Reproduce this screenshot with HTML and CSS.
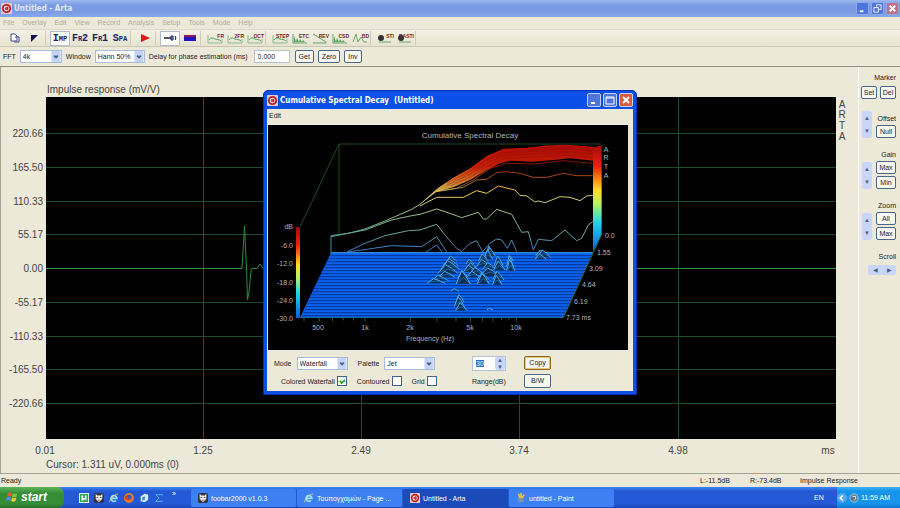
FILE: index.html
```html
<!DOCTYPE html>
<html lang="en">
<head>
    <meta charset="UTF-8">
    <meta name="viewport" content="width=device-width, initial-scale=1.0">
    <title>Untitled - Arta</title>
    <link rel="stylesheet" href="styles.css">
</head>
<body>

    <!-- Shared icons -->
    <svg class="sprites" aria-hidden="true">
        <symbol id="arta" viewBox="0 0 12 12">
            <rect width="12" height="12" rx="1" fill="#e9c9cc"/>
            <circle cx="6" cy="6" r="5" fill="#b3202a"/>
            <circle cx="6" cy="6" r="3" fill="#fff"/>
            <path d="M6 4h2v4H6z" fill="#b3202a"/>
            <circle cx="5.500" cy="6" r="1.500" fill="#d3303a"/>
        </symbol>
        <symbol id="ie" viewBox="0 0 12 12">
            <path d="M3 6.500h6.500A3.500 3.500 0 1 0 8.500 9" fill="none" stroke="#9be0ff" stroke-width="2"/>
            <path d="M1 11C0 8 6 2 11 1" fill="none" stroke="#e8d37a" stroke-width="1"/>
        </symbol>
        <symbol id="foobar" viewBox="0 0 12 12">
            <rect width="12" height="12" rx="2" fill="#33343c"/>
            <path d="M2 1l2 2h4l2-2v6L6 11 2 7z" fill="#eee"/>
            <path d="M3 5h2v1H3zM7 5h2v1H7zM5 8h2v1H5z" fill="#222"/>
        </symbol>
        <symbol id="curve" viewBox="0 0 16 12">
            <path d="M1 3v8h14V7" fill="none" stroke="#8dbb8d" stroke-width="1"/>
            <path d="M2 8c2-3 4-2 6-1s4 0 6 2" fill="none" stroke="#4f9d5c" stroke-width="1"/>
        </symbol>
        <symbol id="spikes" viewBox="0 0 16 12">
            <path d="M1 2v9h14" fill="none" stroke="#5fa568" stroke-width="1"/>
            <path d="M2 10V4l2 6 1-4 2 4 1-3 2 3 1-2 2 2z" fill="#4f9d5c"/>
        </symbol>
    </svg>

    <!-- Title bar -->
    <header class="titlebar">
        <svg class="app-icon"><use href="#arta"/></svg>
        <h1>Untitled - Arta</h1>
        <div class="win-buttons">
            <button class="win-btn" aria-label="Minimize"><svg viewBox="0 0 12 12"><path d="M3 9h4" stroke="#fff" stroke-width="2"/></svg></button>
            <button class="win-btn" aria-label="Restore"><svg viewBox="0 0 12 12"><path d="M5 4V2h5v5H8M2 5h5v5H2z" fill="none" stroke="#fff"/></svg></button>
            <button class="win-btn close" aria-label="Close"><svg viewBox="0 0 12 12"><path d="M3 3l6 6M9 3l-6 6" stroke="#fff" stroke-width="2"/></svg></button>
        </div>
    </header>

    <!-- Menu -->
    <nav class="menubar">
        <a href="#">File</a>
        <a href="#">Overlay</a>
        <a href="#">Edit</a>
        <a href="#">View</a>
        <a href="#">Record</a>
        <a href="#">Analysis</a>
        <a href="#">Setup</a>
        <a href="#">Tools</a>
        <a href="#">Mode</a>
        <a href="#">Help</a>
    </nav>

    <!-- Toolbar -->
    <div class="toolbar">
        <button aria-label="New"><svg viewBox="0 0 16 12"><path d="M4 2h4l2 2v5H4zM8 5h4v5H7" fill="#fff" stroke="#454a80"/></svg></button>
        <button aria-label="Marker"><svg viewBox="0 0 16 12"><path d="M4 3h7L4 10z" fill="#101050"/></svg></button>
        <span class="sep"></span>
        <button class="word pressed">Imp</button>
        <button class="word">Fr2</button>
        <button class="word">Fr1</button>
        <button class="word">Spa</button>
        <span class="sep"></span>
        <button aria-label="Start"><svg viewBox="0 0 16 12"><path d="M4 2l9 4-9 4z" fill="#e01818"/></svg></button>
        <span class="sep"></span>
        <button class="pressed" aria-label="Microphone"><svg viewBox="0 0 16 12"><path d="M2 6h7" stroke="#556" stroke-width="2"/><path d="M9 4h2v4H9zM13 4c1 1 1 3 0 4" fill="#8a90b8" stroke="#1a1f70" stroke-width="1"/></svg></button>
        <button aria-label="Level"><svg viewBox="0 0 16 12"><path d="M2 3h12v3H2z" fill="#8b1a55"/><path d="M2 5h12v4H2z" fill="#2212c8"/></svg></button>
        <span class="sep"></span>
        <button class="plot"><svg viewBox="0 0 16 12"><use href="#curve"/></svg><b>FR</b></button>
        <button class="plot"><svg viewBox="0 0 16 12"><use href="#curve"/></svg><b>2FR</b></button>
        <button class="plot"><svg viewBox="0 0 16 12"><use href="#curve"/></svg><b>OCT</b></button>
        <span class="sep"></span>
        <button class="plot"><svg viewBox="0 0 16 12"><use href="#curve"/></svg><b>STEP</b></button>
        <button class="plot"><svg viewBox="0 0 16 12"><use href="#spikes"/></svg><b>ETC</b></button>
        <button class="plot"><svg viewBox="0 0 16 12"><path d="M1 2l13 8v1H1" fill="none" stroke="#5fa568"/></svg><b>REV</b></button>
        <button class="plot"><svg viewBox="0 0 16 12"><use href="#spikes"/></svg><b>CSD</b></button>
        <button class="plot"><svg viewBox="0 0 16 12"><path d="M1 10l3-8 2 8 3-5 3 5h3" fill="none" stroke="#6da56d"/></svg><b>BD</b></button>
        <span class="sep"></span>
        <button class="plot"><svg viewBox="0 0 16 12"><circle cx="4" cy="6" r="3" fill="#333"/><path d="M2 10h12" stroke="#6da56d"/></svg><b>STI</b></button>
        <button class="plot"><svg viewBox="0 0 16 12"><circle cx="4" cy="6" r="3" fill="#333"/><path d="M2 10h12" stroke="#6da56d"/></svg><b>RASTI</b></button>
        <span class="sep"></span>
    </div>

    <!-- FFT settings -->
    <form class="settings">
        <label for="fft">FFT</label>
        <select id="fft" class="fft"><option>4k</option></select>
        <label for="win">Window</label>
        <select id="win" class="window-type"><option>Hann 50%</option></select>
        <label for="delay">Delay for phase estimation (ms)</label>
        <input id="delay" type="text" value="0.000">
        <button type="button" class="btn">Get</button>
        <button type="button" class="btn">Zero</button>
        <button type="button" class="btn">Inv</button>
    </form>

    <main>
        <!-- Impulse response -->
        <section class="chart">
            <svg viewBox="1 0 857 406" preserveAspectRatio="xMinYMin meet">
                <rect x="46" y="30" width="790" height="342" fill="#000"/>
                <path class="grid" d="M46 66.500h790M46 100.500h790M46 134.500h790M46 167.500h790M46 235.500h790M46 269.500h790M46 302.500h790M46 336.500h790M203.500 30v342M361.500 30v342M519.500 30v342M678.500 30v342"/>
                <path class="trace" d="M46 201.500H242L244.500 159L246.500 201L247.500 233L249 225L251 204L252 201.500H257L260 197L263 201.500H836"/>
                <g class="chart-text">
                    <text x="47" y="26">Impulse response (mV/V)</text>
                    <g text-anchor="end">
                        <text x="43" y="70">220.66</text>
                        <text x="43" y="104">165.50</text>
                        <text x="43" y="138">110.33</text>
                        <text x="43" y="171">55.17</text>
                        <text x="43" y="205">0.00</text>
                        <text x="43" y="239">-55.17</text>
                        <text x="43" y="273">-110.33</text>
                        <text x="43" y="306">-165.50</text>
                        <text x="43" y="340">-220.66</text>
                    </g>
                    <g text-anchor="middle">
                        <text x="45" y="387">0.01</text>
                        <text x="203" y="387">1.25</text>
                        <text x="361" y="387">2.49</text>
                        <text x="519" y="387">3.74</text>
                        <text x="678" y="387">4.98</text>
                        <text x="828" y="387">ms</text>
                        <text x="842" y="41">A</text>
                        <text x="842" y="51">R</text>
                        <text x="842" y="62">T</text>
                        <text x="842" y="73">A</text>
                    </g>
                    <text x="46" y="401">Cursor: 1.311 uV, 0.000ms (0)</text>
                </g>
            </svg>
        </section>

        <!-- Side controls -->
        <aside class="side">
            <div class="group">
                <span class="caption">Marker</span>
                <div class="pair">
                    <button class="btn">Set</button>
                    <button class="btn">Del</button>
                </div>
            </div>
            <div class="group with-spin">
                <div class="spin"><button aria-label="Offset up">▲</button><button aria-label="Offset down">▼</button></div>
                <div class="stack"><span class="caption">Offset</span><button class="btn">Null</button></div>
            </div>
            <div class="group with-spin">
                <div class="spin"><button aria-label="Gain up">▲</button><button aria-label="Gain down">▼</button></div>
                <div class="stack"><span class="caption">Gain</span><button class="btn">Max</button><button class="btn">Min</button></div>
            </div>
            <div class="group with-spin">
                <div class="spin"><button aria-label="Zoom up">▲</button><button aria-label="Zoom down">▼</button></div>
                <div class="stack"><span class="caption">Zoom</span><button class="btn">All</button><button class="btn">Max</button></div>
            </div>
            <div class="group">
                <span class="caption">Scroll</span>
                <div class="spin flat"><button aria-label="Scroll left">◀</button><button aria-label="Scroll right">▶</button></div>
            </div>
        </aside>
    </main>

    <!-- Status bar -->
    <div class="status">
        <span class="ready">Ready</span>
        <span class="level">L:-11.5dB</span>
        <span class="level">R:-73.4dB</span>
        <span class="mode">Impulse Response</span>
    </div>

    <!-- Taskbar -->
    <footer class="taskbar">
        <button class="start">
            <svg viewBox="0 0 16 14"><path d="M3 2c2-1 3-1 5 0L7 6C5 5 4 5 2 6z" fill="#e8562a"/><path d="M9 2c2 1 3 1 5 0l-1 4c-2 1-3 1-5 0z" fill="#7fc242"/><path d="M2 7c2-1 3-1 5 0l-1 4c-2-1-3-1-5 0z" fill="#4a8df0"/><path d="M8 7c2 1 3 1 5 0l-1 4c-2 1-3 1-5 0z" fill="#f6c52c"/></svg>
            start
        </button>
        <div class="quick">
            <a href="#" aria-label="uTorrent"><svg viewBox="0 0 12 12"><rect width="12" height="12" rx="1" fill="#fff"/><rect x="1" y="1" width="10" height="10" fill="#2fa84e"/><path d="M4 3v6M4 7h4V3M8 7v1" fill="none" stroke="#fff" stroke-width="2"/></svg></a>
            <a href="#" aria-label="foobar2000"><svg><use href="#foobar"/></svg></a>
            <a href="#" aria-label="Internet Explorer"><svg><use href="#ie"/></svg></a>
            <a href="#" aria-label="Firefox"><svg viewBox="0 0 12 12"><circle cx="6" cy="6" r="6" fill="#e6762a"/><circle cx="6" cy="5" r="3" fill="#2c5fae"/><path d="M1 3c2 0 3 1 4 3l3 1-3 2-4-2z" fill="#c84a1c"/></svg></a>
            <a href="#" aria-label="Outlook"><svg viewBox="0 0 12 12"><path d="M2 4l5-3 4 1v6l-4 3-5-1z" fill="#d6eeff"/><path d="M4 5l3-1v4l-3 1z" fill="#2f7fd0"/></svg></a>
            <a href="#" aria-label="Sum"><svg viewBox="0 0 12 12"><path d="M10 3V2H2l4 4-4 4h8V9" fill="none" stroke="#5cc0ff" stroke-width="1"/></svg></a>
            <a href="#" class="more" aria-label="More">»</a>
        </div>
        <div class="tasks">
            <button><svg><use href="#foobar"/></svg>foobar2000 v1.0.3</button>
            <button><svg><use href="#ie"/></svg>Τουπογχαμών - Page ...</button>
            <button class="active"><svg><use href="#arta"/></svg>Untitled - Arta</button>
            <button><svg viewBox="0 0 12 12"><path d="M2 5h7v6H3z" fill="#7c93a8"/><path d="M3 1l2 5M6 0v6M10 2L7 6" stroke="#f0c040" stroke-width="2"/></svg>untitled - Paint</button>
        </div>
        <span class="lang">EN</span>
        <div class="tray">
            <svg viewBox="0 0 12 12"><circle cx="6" cy="6" r="6" fill="#55a8f5"/><path d="M7 3L4 6l3 3" fill="none" stroke="#fff" stroke-width="2"/></svg>
            <svg viewBox="0 0 12 12"><circle cx="6" cy="6" r="5" fill="#5b7790" stroke="#b9d2e4"/><path d="M4 4h4v3L6 9" fill="none" stroke="#fff"/></svg>
            <time>11:59 AM</time>
        </div>
    </footer>

    <!-- Spectral decay window -->
    <div class="dialog" role="dialog" aria-labelledby="csd-title">
        <div class="dialog-title">
            <svg class="app-icon"><use href="#arta"/></svg>
            <h2 id="csd-title">Cumulative Spectral Decay&nbsp; (Untitled)</h2>
            <div class="win-buttons">
                <button class="win-btn" aria-label="Minimize"><svg viewBox="0 0 12 12"><path d="M3 9h4" stroke="#fff" stroke-width="2"/></svg></button>
                <button class="win-btn" aria-label="Maximize"><svg viewBox="0 0 12 12"><path d="M2 3h8v7H2zM2 4h8" fill="none" stroke="#fff"/></svg></button>
                <button class="win-btn close" aria-label="Close"><svg viewBox="0 0 12 12"><path d="M3 3l6 6M9 3l-6 6" stroke="#fff" stroke-width="2"/></svg></button>
            </div>
        </div>
        <div class="dialog-body">
            <nav class="dialog-menu"><a href="#">Edit</a></nav>
            <svg class="decay" viewBox="0 0 360 225">
                <defs>
                    <linearGradient id="jet" x1="0" y1="0" x2="0" y2="1">
                        <stop offset="0" stop-color="#a00c08"/>
                        <stop offset=".2" stop-color="#f02010"/>
                        <stop offset=".42" stop-color="#ffe020"/>
                        <stop offset=".55" stop-color="#b8f060"/>
                        <stop offset=".72" stop-color="#20d8e8"/>
                        <stop offset="1" stop-color="#0a5ae0"/>
                    </linearGradient>
                    <linearGradient id="height" gradientUnits="userSpaceOnUse" x1="0" y1="75" x2="0" y2="400">
                        <stop offset="0" stop-color="#c80c04"/>
                        <stop offset=".2" stop-color="#e82408"/>
                        <stop offset=".3" stop-color="#f47020"/>
                        <stop offset=".43" stop-color="#eed060"/>
                        <stop offset=".6" stop-color="#a8c880"/>
                        <stop offset=".85" stop-color="#5aa0a0"/>
                        <stop offset="1" stop-color="#2f6ed0"/>
                    </linearGradient>
                </defs>
                <rect width="360" height="225" fill="#000"/>
                <path d="M32 102L71 19H333M71 19v90" fill="none" stroke="#1d4a22"/>
                <rect x="28" y="102" width="4" height="91" fill="url(#jet)"/>
                <g transform="scale(.33333) translate(456 -15)">
                    <path d="M-267 398H519L430 593H-360z" fill="#0a62ee"/>
                    <g id="floor"></g>
                    <path d="M-267 398H519" stroke="#3aa0f0" stroke-width="3"/>
                    <path d="M-267 400V347" stroke="#3f90a8" stroke-width="3"/>
                    <path d="M0 253L55 205L100 175L150 147L200 110L250 88L320 85L380 78L440 76L520 82V122L450 115L400 120L340 125L270 122L240 130L200 150L150 180L100 202L50 215z" fill="url(#height)" opacity=".85"/>
                    <g class="curves" stroke="url(#height)">
                        <path d="M-267 347L-215 340L-165 327L-105 303L-25 268L0 253L55 205L100 175L150 147L200 110L250 88L320 85L380 78L440 76L518 82"/>
                        <path d="M50 213L110 205L160 180L210 145L260 130L340 132L430 122L518 130" opacity=".6"/>
                        <path d="M50 215L130 202L170 180L200 178L230 158L260 155L300 160L340 172L380 172L430 160L470 167L518 167" opacity=".7"/>
                        <path d="M0 258L50 232H130L170 212L200 220L235 198L285 210L300 226L320 228L345 246L355 243L375 248L420 230L450 232L480 242L500 228L518 226"/>
                        <path d="M-267 350L-165 330L-85 300L-25 287L0 283L50 267L90 280L125 293L175 277L190 297H200L230 268L275 283L305 337L325 335L340 390L355 358L395 362L435 330L470 362L485 355L505 315L518 305"/>
                        <path d="M-220 396L-165 370L-105 347L-35 332L0 330L50 313L75 345L110 385L125 395L150 370L170 362L188 395L210 370L230 357L245 360L262 385L275 360L290 395"/>
                        <path d="M-215 396L-85 377L5 380L50 350L80 395M15 398L50 375L68 398"/>
                    </g>
                    <path class="band" d="M80 190L150 154L200 120L250 98L320 94L440 86L518 92M80 196L150 163L200 130L250 107L320 103L440 96L518 102M90 198L150 172L200 141L250 116L320 112L440 106L518 112"/>
                    <path d="M519 82L545 76V343L519 396z" fill="url(#jet)"/>
                    <path d="M545 343L430 593" stroke="#226a38" stroke-width="3"/>
                    <path d="M-360 593H430M-348 593v12M-302 593v12M-263 593v12M-230 593v8M-200 593v8M-165 593v12M-28 593v12M51 593v12M108 593v12M151 593v12M188 593v12M219 593v12M245 593v8M267 593v8M289 593v12" stroke="#2b7c70" stroke-width="2"/>
                    <g id="peaks"></g>
                </g>
                <g class="decay-text">
                    <text x="202" y="13" text-anchor="middle">Cumulative Spectral Decay</text>
                    <g text-anchor="end" class="small">
                        <text x="25" y="104">dB</text>
                        <text x="25" y="123">-6.0</text>
                        <text x="25" y="141">-12.0</text>
                        <text x="25" y="160">-18.0</text>
                        <text x="25" y="178">-24.0</text>
                        <text x="25" y="196">-30.0</text>
                    </g>
                    <g text-anchor="middle" class="small">
                        <text x="50" y="205">500</text>
                        <text x="97" y="205">1k</text>
                        <text x="142" y="205">2k</text>
                        <text x="202" y="205">5k</text>
                        <text x="248" y="205">10k</text>
                        <text x="162" y="216">Frequency (Hz)</text>
                        <text x="338" y="27">A</text>
                        <text x="338" y="35">R</text>
                        <text x="338" y="44">T</text>
                        <text x="338" y="53">A</text>
                    </g>
                    <g class="small">
                        <text x="337" y="113">0.0</text>
                        <text x="329" y="130">1.55</text>
                        <text x="321" y="146">3.09</text>
                        <text x="314" y="162">4.64</text>
                        <text x="306" y="179">6.19</text>
                        <text x="298" y="195">7.73 ms</text>
                    </g>
                </g>
            </svg>
            <form class="options">
                <div class="options-left">
                    <div class="line">
                        <label for="mode">Mode</label>
                        <select id="mode"><option>Waterfall</option></select>
                        <label for="palette" class="palette">Palette</label>
                        <select id="palette"><option>Jet</option></select>
                    </div>
                    <div class="line checks">
                        <label>Colored Waterfall<input type="checkbox" checked></label>
                        <label>Contoured<input type="checkbox"></label>
                        <label>Grid<input type="checkbox"></label>
                    </div>
                </div>
                <div class="range">
                    <div class="range-box">
                        <input id="range" type="text" value="30">
                        <div class="spin"><button type="button" aria-label="Range up">▲</button><button type="button" aria-label="Range down">▼</button></div>
                    </div>
                    <label for="range">Range(dB)</label>
                </div>
                <div class="actions">
                    <button type="button" class="btn default">Copy</button>
                    <button type="button" class="btn">B/W</button>
                </div>
            </form>
        </div>
    </div>

    <script src="decay.js"></script>
</body>
</html>
```
FILE: decay.js
```js
const floor = document.getElementById('floor');
const peaks = document.getElementById('peaks');

// Time slices on the floor of the waterfall
let lines = '';
for (let y = 407; y < 593; y += 9) {
    const shift = (y - 398) * 89 / 195;
    lines += `<path d="M${-267 - shift} ${y}H${519 - shift}"/>`;
}
floor.innerHTML = lines;

// Ridges left on the floor: x, base y, width, height
const ridges = [
    [365, 408, 36, 18], [372, 412, 40, 22], [362, 418, 34, 16],
    [208, 398, 16, 20], [212, 408, 28, 26], [205, 418, 26, 28], [190, 424, 30, 22],
    [272, 424, 16, 16], [270, 440, 20, 34], [272, 452, 24, 34],
    [95, 424, 30, 16], [92, 436, 44, 20], [90, 448, 56, 26], [84, 460, 60, 26],
    [150, 432, 24, 14], [155, 444, 30, 16], [150, 456, 40, 20], [170, 464, 46, 22],
    [190, 440, 40, 22], [208, 448, 40, 20], [236, 436, 26, 28], [238, 450, 34, 26],
    [80, 472, 50, 18], [60, 482, 50, 16], [48, 490, 56, 14],
    [130, 476, 34, 24], [130, 492, 42, 40], [160, 472, 40, 18], [210, 468, 60, 24],
    [190, 482, 40, 24], [190, 492, 36, 32], [235, 480, 34, 26], [232, 494, 28, 28],
    [105, 514, 24, 8], [120, 546, 24, 22], [118, 560, 30, 30], [124, 572, 34, 24],
    [210, 570, 18, 5]
];

peaks.innerHTML = ridges.map(([x, y, w, h]) => {
    const left = x - w / 2;
    const right = x + w / 2;
    return `<path class="ridge" d="M${left} ${y}L${x - w / 8} ${y - h}L${x + w / 6} ${y - h * 0.6}L${right} ${y}"/>` +
        `<path class="ridge-line" d="M${left + 4} ${y - 3}L${x} ${y - h * 0.5}L${right - 4} ${y - 3}"/>`;
}).join('');

document.getElementById('range').select();
```
FILE: styles.css
```css
/* General */
* {
    box-sizing: border-box;
}

body {
    margin: 0;
    min-height: 100vh;
    display: flex;
    flex-direction: column;
    position: relative;
    background: #ece9d8;
    color: #222;
    font-family: "Liberation Sans", Arial, sans-serif;
    font-size: 7px;
    line-height: 9px;
}

a {
    color: inherit;
    text-decoration: none;
}

button,
input,
select {
    margin: 0;
    padding: 0;
    font: inherit;
    color: inherit;
}

.sprites {
    display: none;
}

.app-icon {
    width: 11px;
    height: 11px;
    flex: none;
}

/* Title bar */
.titlebar {
    display: flex;
    align-items: center;
    gap: 2px;
    height: 17px;
    padding: 0 1px;
    background: linear-gradient(#9db9f0, #7a9be2 30%, #7a9be4 70%, #88a8ec);
    color: #dfe8fa;
}

.titlebar h1,
.dialog-title h2 {
    flex: 1;
    margin: 0;
    font-family: "DejaVu Sans Condensed", "DejaVu Sans", sans-serif;
    font-size: 8px;
    font-weight: bold;
}

.win-buttons {
    display: flex;
    gap: 2px;
}

.win-btn {
    display: flex;
    width: 14px;
    height: 14px;
    border: 1px solid #c3d1f4;
    border-radius: 2px;
    background: #4f74dc;
}

.titlebar .win-btn {
    width: 13px;
    height: 13px;
    border-color: #8fa8ea;
}

.win-btn svg {
    width: 100%;
    height: 100%;
}

.win-btn.close {
    background: #dc5a3c;
}

.titlebar .win-btn.close {
    background: #bd7088;
}

/* Menu */
.menubar {
    display: flex;
    gap: 8px;
    height: 13px;
    padding: 1px 3px;
    border-bottom: 1px solid #dcd9c6;
    color: #aeab9c;
}

/* Toolbar */
.toolbar {
    display: flex;
    align-items: center;
    height: 17px;
    padding-left: 5px;
    border-bottom: 1px solid #c9c6b4;
    background: linear-gradient(#f3f1e4, #e6e3d0);
}

.toolbar button {
    display: flex;
    align-items: center;
    justify-content: center;
    position: relative;
    width: 20px;
    height: 15px;
    border: 1px solid transparent;
    background: none;
}

.toolbar button svg {
    width: 16px;
    height: 12px;
}

.toolbar .pressed {
    border-color: #b4bccb;
    background: #fcfcfa;
}

.toolbar .word {
    font-family: "Liberation Mono", monospace;
    font-size: 10px;
    font-weight: bold;
    font-variant: small-caps;
    color: #22225e;
}

/* Label over the little plot */
.plot b {
    position: absolute;
    top: 1px;
    right: 0;
    font-size: 5px;
    line-height: 6px;
    color: #6e2424;
}

.sep {
    width: 5px;
    height: 14px;
    border-left: 1px solid #cfccba;
}

/* Settings */
.settings {
    display: flex;
    align-items: center;
    gap: 4px;
    height: 20px;
    padding: 0 3px;
    border-bottom: 1px solid #8f8d80;
}

select {
    height: 13px;
    padding: 0 2px;
    border: 1px solid #a9bcd6;
    border-radius: 0;
    appearance: none;
    background: #fff url("data:image/svg+xml,%3Csvg xmlns='http://www.w3.org/2000/svg' viewBox='0 0 10 12'%3E%3Crect width='10' height='12' rx='1' fill='%23c3d3fb'/%3E%3Cpath d='M3 5l2 2 2-2' fill='none' stroke='%234d6185' stroke-width='2'/%3E%3C/svg%3E") no-repeat right center / 10px 11px;
}

.fft {
    width: 42px;
}

.window-type {
    width: 50px;
}

.settings input {
    width: 36px;
    height: 13px;
    margin: 0 1px 0 2px;
    padding: 0 3px;
    border: 1px solid #b5c2d2;
    background: #fff;
}

.btn {
    height: 13px;
    padding: 0 3px;
    border: 1px solid #4b6785;
    border-radius: 2px;
    background: #f7f6f0;
    line-height: 10px;
    white-space: nowrap;
}

/* Main area */
main {
    flex: 1;
    display: flex;
}

.chart {
    flex: 1;
    border-left: 1px solid #a5a294;
}

.chart svg {
    display: block;
    width: 100%;
}

.grid {
    fill: none;
    stroke: #1f4c2a;
}

.trace {
    fill: none;
    stroke: #2e8a40;
}

.chart-text {
    font-size: 10px;
    fill: #444;
}

/* Side controls */
.side {
    display: flex;
    flex-direction: column;
    gap: 12px;
    width: 42px;
    padding: 6px 4px 0 3px;
    border-left: 1px solid #fff;
}

.group {
    display: flex;
    flex-direction: column;
    align-items: flex-end;
    gap: 4px;
}

.with-spin {
    flex-direction: row;
    justify-content: space-between;
}

.pair {
    display: flex;
    gap: 3px;
}

.pair .btn {
    width: 16px;
    padding: 0;
}

.stack {
    display: flex;
    flex-direction: column;
    align-items: flex-end;
    gap: 2px;
}

.stack .btn {
    width: 20px;
    padding: 0;
}

.spin {
    display: flex;
    flex-direction: column;
    width: 10px;
    height: 27px;
    border-radius: 2px;
    background: #c9d6fa;
}

.spin button {
    flex: 1;
    border: 0;
    background: none;
    font-size: 6px;
    line-height: 6px;
    color: #4d6185;
}

.spin.flat {
    flex-direction: row;
    width: 28px;
    height: 10px;
}

/* Status bar */
.status {
    display: flex;
    align-items: center;
    height: 14px;
    padding: 0 1px;
    border-top: 1px solid #a5a294;
}

.ready {
    flex: 1;
}

.level {
    width: 50px;
}

.mode {
    width: 99px;
}

/* Taskbar */
.taskbar {
    display: flex;
    height: 21px;
    background: linear-gradient(#3f86ee, #2459d6 20%, #2459d6 80%, #1c47b4);
    color: #fff;
}

.start {
    display: flex;
    align-items: center;
    gap: 2px;
    width: 64px;
    padding-left: 5px;
    border: 0;
    border-radius: 0 7px 7px 0;
    background: linear-gradient(#5fb45c, #358d35 30%, #358d35 80%, #27702a);
    font-size: 12px;
    font-weight: bold;
    font-style: italic;
}

.start svg {
    width: 14px;
    height: 13px;
}

.quick {
    display: flex;
    align-items: center;
    gap: 5px;
    width: 127px;
    padding-left: 15px;
}

.quick svg,
.tasks svg,
.tray svg {
    display: block;
    flex: none;
    width: 10px;
    height: 10px;
}

.more {
    padding: 0 0 8px 3px;
}

.tasks {
    display: flex;
    flex: 1;
    padding: 2px 0 1px;
}

.tasks button {
    display: flex;
    align-items: center;
    gap: 3px;
    width: 106px;
    padding: 0 7px;
    border: 0;
    border-right: 1px solid #2459d6;
    border-radius: 2px;
    background: #3c80f3;
    white-space: nowrap;
}

.tasks .active {
    background: #1b4bb8;
}

.lang {
    align-self: center;
    width: 23px;
}

.tray {
    display: flex;
    align-items: center;
    gap: 2px;
    width: 63px;
    background: linear-gradient(#3fb2f4, #1693ea 20%, #1693ea 80%, #0f74c8);
}

.tray time {
    white-space: nowrap;
}

/* Dialog */
.dialog {
    position: absolute;
    top: 90px;
    left: 263px;
    width: 374px;
    padding: 0 3px 3px;
    border: 1px solid #0a2fb0;
    border-radius: 5px 5px 0 0;
    background: #0b50e6;
}

.dialog-title {
    display: flex;
    align-items: center;
    gap: 2px;
    height: 18px;
    color: #fff;
}

.dialog-body {
    padding: 0 5px 0 1px;
    background: #ece9d8;
}

.dialog-menu {
    height: 16px;
    padding: 2px 1px;
}

.decay {
    display: block;
    width: 100%;
}

.decay-text {
    font-size: 8px;
    fill: #b4b4b4;
}

.decay-text .small {
    font-size: 7px;
}

.curves path {
    fill: none;
    stroke-width: 3px;
}

.band {
    fill: none;
    stroke: #801008;
    stroke-width: 2px;
    opacity: 0.6;
}

#floor path {
    stroke: #063290;
    stroke-width: 3px;
}

.ridge {
    fill: #0a3058;
    stroke: #46b0f4;
    stroke-width: 3px;
}

.ridge-line {
    fill: none;
    stroke: #2b80c8;
    stroke-width: 2px;
}

/* Dialog options */
.options {
    display: flex;
    padding: 6px 0 0 6px;
}

.options-left {
    width: 198px;
}

.line {
    display: flex;
    align-items: center;
    gap: 5px;
    height: 15px;
}

.line select {
    width: 51px;
}

.palette {
    margin-left: 5px;
}

.line.checks {
    gap: 10px;
    height: 20px;
    padding-left: 7px;
}

.checks label {
    display: flex;
    align-items: center;
    gap: 2px;
}

.checks input {
    appearance: none;
    width: 10px;
    height: 10px;
    border: 1px solid #3f6689;
    background: #fff;
}

.checks input:checked {
    background: #fff url("data:image/svg+xml,%3Csvg xmlns='http://www.w3.org/2000/svg' viewBox='0 0 8 8'%3E%3Cpath d='M1 3l2 3 4-4' fill='none' stroke='%2321a121' stroke-width='2'/%3E%3C/svg%3E") center / 7px 7px;
}

.range {
    width: 52px;
}

.range-box {
    display: flex;
    width: 34px;
    height: 15px;
    margin-bottom: 6px;
    border: 1px solid #b5c2d2;
    background: #fff;
}

.range-box input {
    width: 22px;
    height: 12px;
    padding: 0 3px;
    border: 0;
    outline: none;
    background: none;
}

.range-box input::selection {
    background: #316ac5;
    color: #fff;
}

.range-box .spin {
    height: 13px;
}

.actions {
    display: flex;
    flex-direction: column;
    gap: 4px;
}

.actions .btn {
    width: 27px;
    height: 14px;
}

.default {
    border-color: #8a6a20;
    box-shadow: inset 0 0 0 1px #e8c878;
}
```
